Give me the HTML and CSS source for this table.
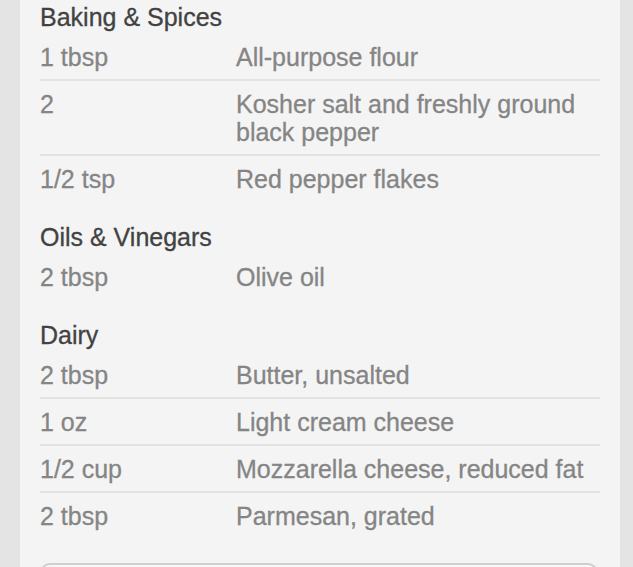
FILE: index.html
```html
<!DOCTYPE html>
<html>
<head>
<meta charset="utf-8">
<link rel="stylesheet" href="styles.css">
</head>
<body>
<div class="card">
  <section class="group">
    <h2 class="group-title">Baking &amp; Spices</h2>
    <div class="row"><span class="amt">1 tbsp</span><span class="name">All-purpose flour</span></div>
    <div class="row"><span class="amt">2</span><span class="name">Kosher salt and freshly ground black pepper</span></div>
    <div class="row"><span class="amt">1/2 tsp</span><span class="name">Red pepper flakes</span></div>
  </section>
  <section class="group">
    <h2 class="group-title">Oils &amp; Vinegars</h2>
    <div class="row"><span class="amt">2 tbsp</span><span class="name">Olive oil</span></div>
  </section>
  <section class="group">
    <h2 class="group-title">Dairy</h2>
    <div class="row"><span class="amt">2 tbsp</span><span class="name">Butter, unsalted</span></div>
    <div class="row"><span class="amt">1 oz</span><span class="name">Light cream cheese</span></div>
    <div class="row"><span class="amt">1/2 cup</span><span class="name">Mozzarella cheese, reduced fat</span></div>
    <div class="row"><span class="amt">2 tbsp</span><span class="name">Parmesan, grated</span></div>
  </section>
  <div class="button"></div>
</div>
</body>
</html>
```
FILE: styles.css
```css
html, body {
  margin: 0;
  padding: 0;
  background: #e4e4e4;
  overflow: hidden;
}
body {
  width: 633px;
  height: 567px;
  font-family: "Liberation Sans", Arial, sans-serif;
  font-size: 25px;
}
.card {
  margin: -19px 13px 0 20px;
  width: 600px;
  box-sizing: border-box;
  padding: 0 20px 40px;
  background: #f4f4f4;
  min-height: 700px;
}
.group-title {
  margin: 0;
  padding: 22px 0 3px;
  font-size: 25px;
  font-weight: normal;
  line-height: 28px;
  color: #424242;
  -webkit-text-stroke: 0.3px #424242;
}
.row {
  display: flex;
  padding: 9px 0 8px;
  line-height: 28px;
  color: #858585;
  -webkit-text-stroke: 0.3px #858585;
  border-bottom: 2px solid #e2e2e2;
}
.row:last-child {
  border-bottom: none;
}
.amt {
  width: 196px;
  flex: none;
}
.name {
  flex: 1;
}
.button {
  margin-top: 25px;
  height: 50px;
  border: 2px solid #cfcfcf;
  border-radius: 10px;
  margin-right: 2px;
  background: #f7f7f7;
}
```
